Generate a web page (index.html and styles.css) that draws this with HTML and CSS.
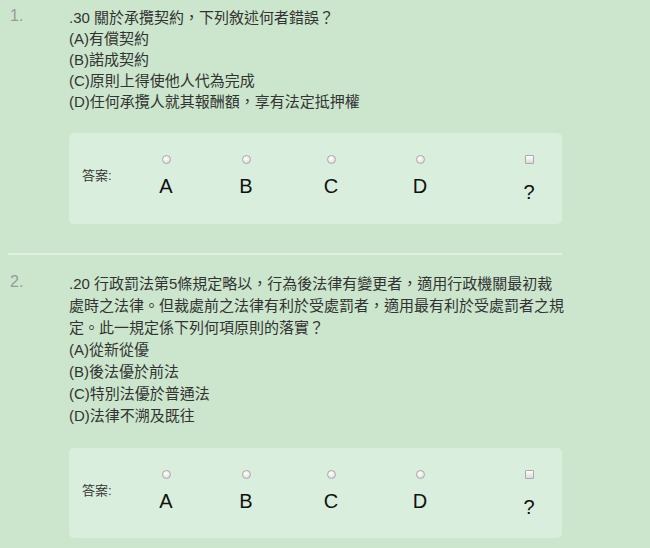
FILE: index.html
```html
<!DOCTYPE html>
<html lang="zh-Hant">
<head>
<meta charset="utf-8">
<title>測驗</title>
<link rel="stylesheet" href="styles.css">
</head>
<body>
<div class="page">
  <div class="question">
    <div class="qnum">1.</div>
    <div class="qmain">
      <div class="qtext qtext-tight">
        <div>.30 關於承攬契約，下列敘述何者錯誤？</div>
        <div>(A)有償契約</div>
        <div>(B)諾成契約</div>
        <div>(C)原則上得使他人代為完成</div>
        <div>(D)任何承攬人就其報酬額，享有法定抵押權</div>
      </div>
      <div class="answer">
        <div class="label">答案:</div>
        <label class="opt"><input type="radio" name="q1"><span class="letter">A</span></label>
        <label class="opt"><input type="radio" name="q1"><span class="letter">B</span></label>
        <label class="opt"><input type="radio" name="q1"><span class="letter">C</span></label>
        <label class="opt"><input type="radio" name="q1"><span class="letter">D</span></label>
        <label class="opt opt-q"><input type="checkbox"><span class="letter">?</span></label>
      </div>
    </div>
  </div>
  <div class="sep"></div>
  <div class="question">
    <div class="qnum">2.</div>
    <div class="qmain">
      <div class="qtext">
        <div>.20 行政罰法第5條規定略以，行為後法律有變更者，適用行政機關最初裁處時之法律。但裁處前之法律有利於受處罰者，適用最有利於受處罰者之規定。此一規定係下列何項原則的落實？</div>
        <div>(A)從新從優</div>
        <div>(B)後法優於前法</div>
        <div>(C)特別法優於普通法</div>
        <div>(D)法律不溯及既往</div>
      </div>
      <div class="answer answer-low">
        <div class="label">答案:</div>
        <label class="opt"><input type="radio" name="q2"><span class="letter">A</span></label>
        <label class="opt"><input type="radio" name="q2"><span class="letter">B</span></label>
        <label class="opt"><input type="radio" name="q2"><span class="letter">C</span></label>
        <label class="opt"><input type="radio" name="q2"><span class="letter">D</span></label>
        <label class="opt opt-q"><input type="checkbox"><span class="letter">?</span></label>
      </div>
    </div>
  </div>
</div>
</body>
</html>
```
FILE: styles.css
```css
html, body {
  margin: 0;
  padding: 0;
  background: #cbe6cc;
}
body {
  font-family: "Liberation Sans", Arial, "Noto Sans CJK TC", sans-serif;
  color: #333;
}
.page {
  padding: 7px 0 0 10px;
  width: 555px;
}
.question {
  display: grid;
  grid-template-columns: 59px 496px;
}
.qnum {
  font-size: 16px;
  line-height: 18px;
  color: #9a9a9a;
}
.qtext {
  font-size: 15px;
  line-height: 22px;
  color: #333;
}
.qtext-tight {
  line-height: 21px;
}
.answer {
  box-sizing: border-box;
  width: 493px;
  height: 91px;
  margin-top: 21px;
  padding: 22px 0 0 13px;
  background: #d9eedc;
  border-radius: 5px;
  display: grid;
  grid-template-columns: 44px 80px 80px 90px 88px 98px;
  align-items: start;
}
.answer-low {
  margin-top: 21px;
  height: 90px;
}
.label {
  font-size: 13px;
  line-height: 15px;
  margin-top: 13px;
  color: #333;
}
.opt {
  display: flex;
  flex-direction: column;
  align-items: center;
}
.opt-q {
  padding-left: 32px;
}
.opt input {
  appearance: none;
  -webkit-appearance: none;
  margin: 0;
  width: 9px;
  height: 9px;
  box-sizing: border-box;
  border: 1px solid #a9a9a9;
  border-radius: 50%;
  background: radial-gradient(circle at 40% 35%, #ffffff 0%, #e9e9e9 55%, #cfcfcf 100%);
}
.opt input[type="checkbox"] {
  border-radius: 1px;
  background: linear-gradient(#fdfdfd, #dcdcdc);
}
.letter {
  font-size: 20px;
  line-height: 23px;
  margin-top: 11px;
  color: #111;
}
.opt-q .letter {
  margin-top: 17px;
}
.sep {
  width: 554px;
  height: 2px;
  margin: 29px 0 18px -2px;
  background: #e1f1e2;
}
```
